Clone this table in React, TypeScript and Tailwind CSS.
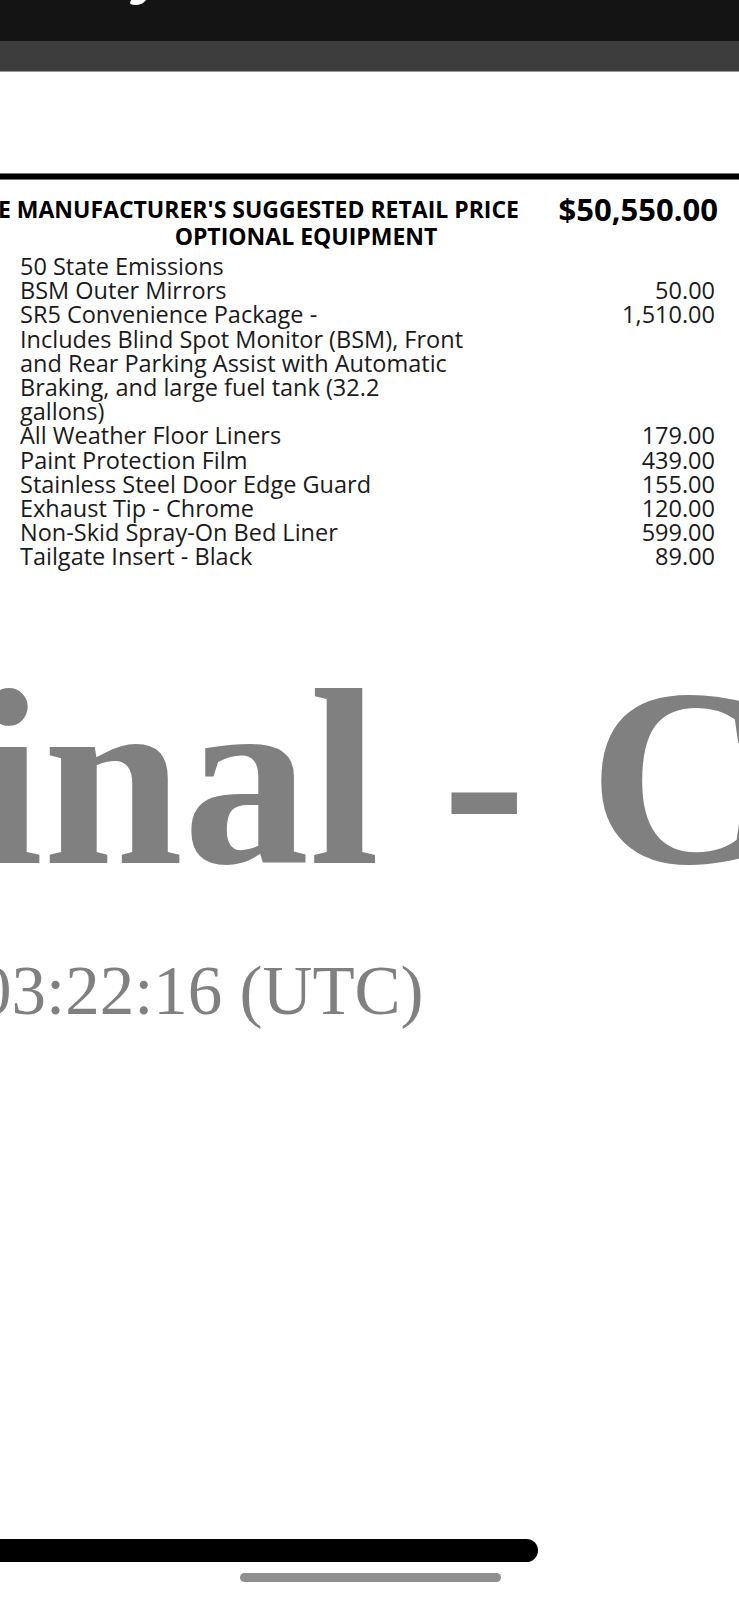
const items: { name: string[]; price?: string }[] = [
  { name: ['50 State Emissions'] },
  { name: ['BSM Outer Mirrors'], price: '50.00' },
  {
    name: [
      'SR5 Convenience Package -',
      'Includes Blind Spot Monitor (BSM), Front',
      'and Rear Parking Assist with Automatic',
      'Braking, and large fuel tank (32.2',
      'gallons)',
    ],
    price: '1,510.00',
  },
  { name: ['All Weather Floor Liners'], price: '179.00' },
  { name: ['Paint Protection Film'], price: '439.00' },
  { name: ['Stainless Steel Door Edge Guard'], price: '155.00' },
  { name: ['Exhaust Tip - Chrome'], price: '120.00' },
  { name: ['Non-Skid Spray-On Bed Liner'], price: '599.00' },
  { name: ['Tailgate Insert - Black'], price: '89.00' },
]

export default function App() {
  return (
    <div className="flex h-[1599px] w-[739px] flex-col overflow-hidden bg-white">
      {/* title bar, only a descender of the title peeks through */}
      <div className="relative h-[41px] bg-[#141414]">
        <svg className="absolute left-[128px] top-0" width="20" height="6" viewBox="0 0 20 6">
          <path d="M3 0 L18 0 C16 3 12 5 7 5 C4 5 2 4 2 3 Z" fill="#ffffff" />
        </svg>
      </div>
      <div className="h-[31px] border-b border-[#9a9a9a] bg-[#3d3d3d]" />
      <div className="h-[101px]" />
      <div className="h-[7px] border-y border-[#777] bg-black" />

      <div className="font-['Open_Sans',sans-serif] text-[#1a1a1a]">
        <div className="mt-[15px] flex h-[28px] items-center">
          <div className="flex w-[519px] shrink-0 justify-end">
            <span className="whitespace-nowrap text-[23px] font-bold text-black">
              BASE MANUFACTURER'S SUGGESTED RETAIL PRICE
            </span>
          </div>
          <div className="flex-1 pr-[21px] text-right text-[31px] font-bold leading-[28px] text-black">
            $50,550.00
          </div>
        </div>
        <div className="h-[26px] w-[612px] text-center text-[23px] font-bold leading-[26px] text-black">
          OPTIONAL EQUIPMENT
        </div>

        <div className="mt-[5px] pl-[20px] pr-[24px] text-[23.5px] leading-[24.2px]">
          {items.map((item) => (
            <div key={item.name[0]} className="flex justify-between">
              <div>
                {item.name.map((line) => (
                  <div key={line} className="whitespace-nowrap">
                    {line}
                  </div>
                ))}
              </div>
              {item.price && <div className="whitespace-nowrap">{item.price}</div>}
            </div>
          ))}
        </div>
      </div>

      <div className="ml-[-27px] mt-[83px] h-[252px] whitespace-nowrap font-['Liberation_Serif',serif] text-[252px] font-bold leading-[252px] text-[#808080]">
        inal - Copy
      </div>
      <div className="ml-[-23px] mt-[53px] h-[69px] whitespace-nowrap font-['Liberation_Serif',serif] text-[69px] leading-[69px] text-[#808080]">
        03:22:16 (UTC)
      </div>

      <div className="mt-auto">
        <div className="h-[23px] w-[538px] rounded-r-full bg-black" />
        <div className="mb-[17px] mt-[11px] flex justify-center">
          <div className="ml-[1px] h-[9px] w-[261px] rounded-full bg-[#8f8f8f]" />
        </div>
      </div>
    </div>
  )
}
